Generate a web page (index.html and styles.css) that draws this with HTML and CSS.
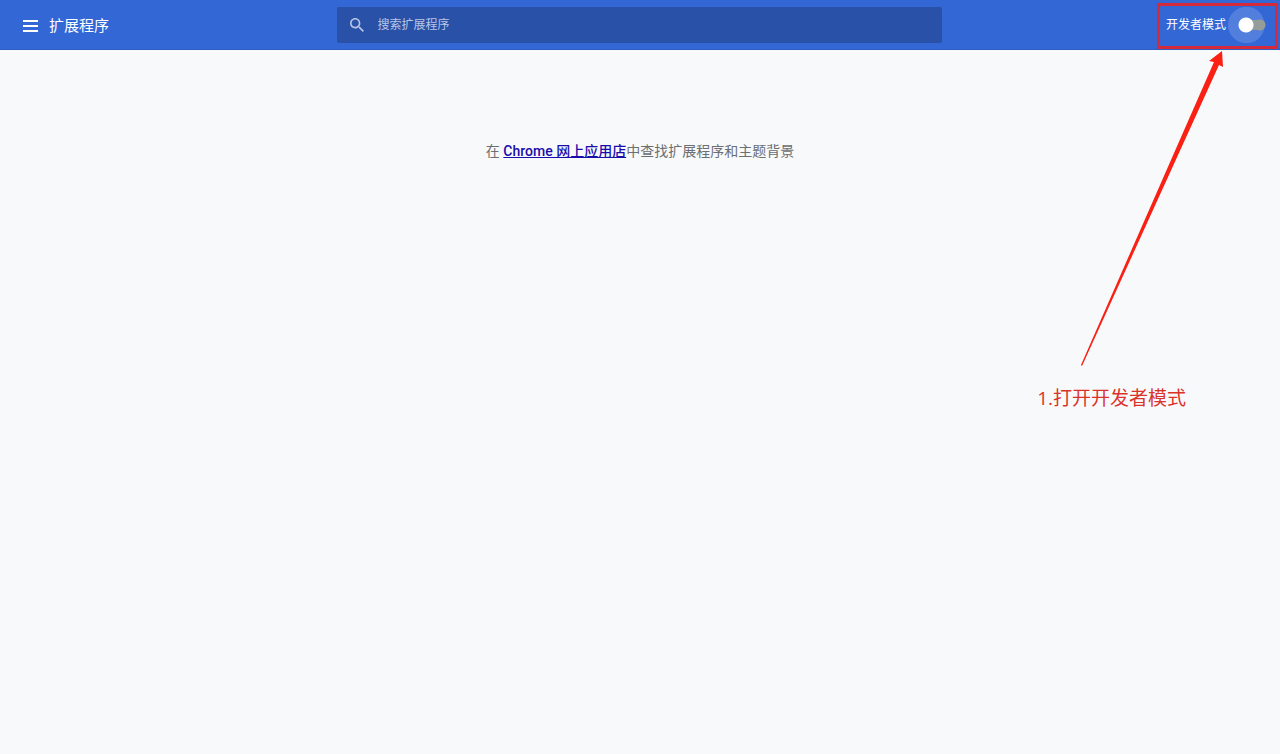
FILE: index.html
```html
<!DOCTYPE html>
<html lang="zh-CN">
<head>
<meta charset="utf-8">
<meta name="viewport" content="width=device-width, initial-scale=1">
<title>扩展程序</title>
<link rel="stylesheet" href="styles.css">
</head>
<body>
<header class="toolbar">
  <div class="toolbar-start">
    <button class="menu-button" type="button" aria-label="主菜单">
      <svg width="16" height="12" viewBox="0 0 16 12" aria-hidden="true"><path d="M0 0h15v2H0zM0 5h15v2H0zM0 10h15v2H0z" fill="currentColor"/></svg>
    </button>
    <h1 class="title">扩展程序</h1>
  </div>
  <label class="search">
    <svg class="search-icon" width="14" height="14" viewBox="3 3 17.5 17.5" aria-hidden="true"><path fill="currentColor" d="M15.5 14h-.79l-.28-.27C15.41 12.59 16 11.11 16 9.5 16 5.91 13.09 3 9.5 3S3 5.91 3 9.5 5.91 16 9.5 16c1.61 0 3.09-.59 4.23-1.57l.27.28v.79l5 4.99L20.49 19l-4.99-5zm-6 0C7.01 14 5 11.99 5 9.5S7.01 5 9.5 5 14 7.01 14 9.5 11.99 14 9.5 14z"/></svg>
    <input class="search-input" type="search" placeholder="搜索扩展程序" aria-label="搜索扩展程序">
  </label>
  <div class="toolbar-end">
    <div class="dev-mode">
      <label for="dev-mode">开发者模式</label>
      <span class="toggle"><input class="toggle-input" id="dev-mode" type="checkbox" role="switch"></span>
    </div>
  </div>
</header>
<main class="content">
  <p class="empty-message">在 <a class="store-link" href="#">Chrome 网上应用店</a>中查找扩展程序和主题背景</p>
</main>
<aside class="annotation">
  <svg class="arrow" width="144" height="316" viewBox="0 0 144 316" aria-hidden="true"><path fill="#fa2013" d="M142 0 129 10l5 1L1 314l1 1L139 14l4 2z"/></svg>
  <p class="annotation-text">1.打开开发者模式</p>
</aside>
</body>
</html>
```
FILE: styles.css
```css
* {
  box-sizing: border-box;
}

body {
  position: relative;
  margin: 0;
  min-height: 100vh;
  background: #f8f9fb;
  color: #6b6e72;
  font-family: Roboto, "Noto Sans CJK SC", sans-serif;
  font-size: 14px;
}

.toolbar {
  display: grid;
  grid-template-columns: 1fr minmax(0, 605px) 1fr;
  align-items: center;
  height: 50px;
  padding-right: 2px;
  background: #3367d6;
  border-bottom: 1px solid #2f5cc0;
  color: #fff;
}

.toolbar-start {
  display: flex;
  align-items: center;
  gap: 10px;
  padding: 2px 0 0 23px;
}

.menu-button {
  display: flex;
  padding: 0;
  border: 0;
  background: none;
  color: #fff;
}

.title {
  margin: 0;
  font-size: 15px;
  font-weight: 400;
  line-height: 20px;
}

.search {
  display: flex;
  align-items: center;
  gap: 14px;
  height: 36px;
  padding: 0 13px;
  border-radius: 2px;
  background: #2951a7;
  color: #b8c6e6;
}

.search-icon {
  flex: none;
}

.search-input {
  flex: 1;
  min-width: 0;
  padding: 0;
  border: 0;
  outline: 0;
  background: none;
  color: #fff;
  font: inherit;
  font-size: 12px;
}

.search-input::placeholder {
  color: #b8c6e6;
  opacity: 1;
}

.toolbar-end {
  display: flex;
  justify-content: flex-end;
}

.dev-mode {
  display: flex;
  align-items: center;
  gap: 2px;
  height: 46px;
  margin-top: 2px;
  padding: 0 9px 2px 6px;
  border: 3px solid #d42a3c;
  font-size: 12px;
  line-height: 18px;
}

.toggle {
  display: flex;
  align-items: center;
  width: 38px;
  height: 36px;
  border-radius: 18px;
  background: radial-gradient(circle at 18px 18px, #527fdd 18px, transparent 19px);
}

.toggle-input {
  appearance: none;
  width: 28px;
  height: 16px;
  margin: 0 0 0 10px;
  border-radius: 8px;
  background:
    radial-gradient(circle at 8px 8px, #fff 7px, transparent 8px),
    linear-gradient(#949d98, #949d98) 8px 3px / 14px 10px no-repeat,
    radial-gradient(circle at 22px 8px, #949d98 5px, transparent 6px);
}

.content {
  padding: 91px 24px 0;
}

.empty-message {
  margin: 0;
  text-align: center;
  line-height: 20px;
}

.store-link {
  color: #1a0dab;
  font-weight: 500;
}

.annotation {
  position: absolute;
  top: 51px;
  right: 56px;
  display: flex;
  flex-direction: column;
  align-items: flex-end;
  gap: 18px;
  pointer-events: none;
}

.annotation-text {
  margin: 0;
  padding-right: 38px;
  color: #dc3328;
  font-family: "Open Sans", "Noto Sans CJK SC", sans-serif;
  font-size: 19px;
  font-weight: 400;
  line-height: 26px;
}
```
